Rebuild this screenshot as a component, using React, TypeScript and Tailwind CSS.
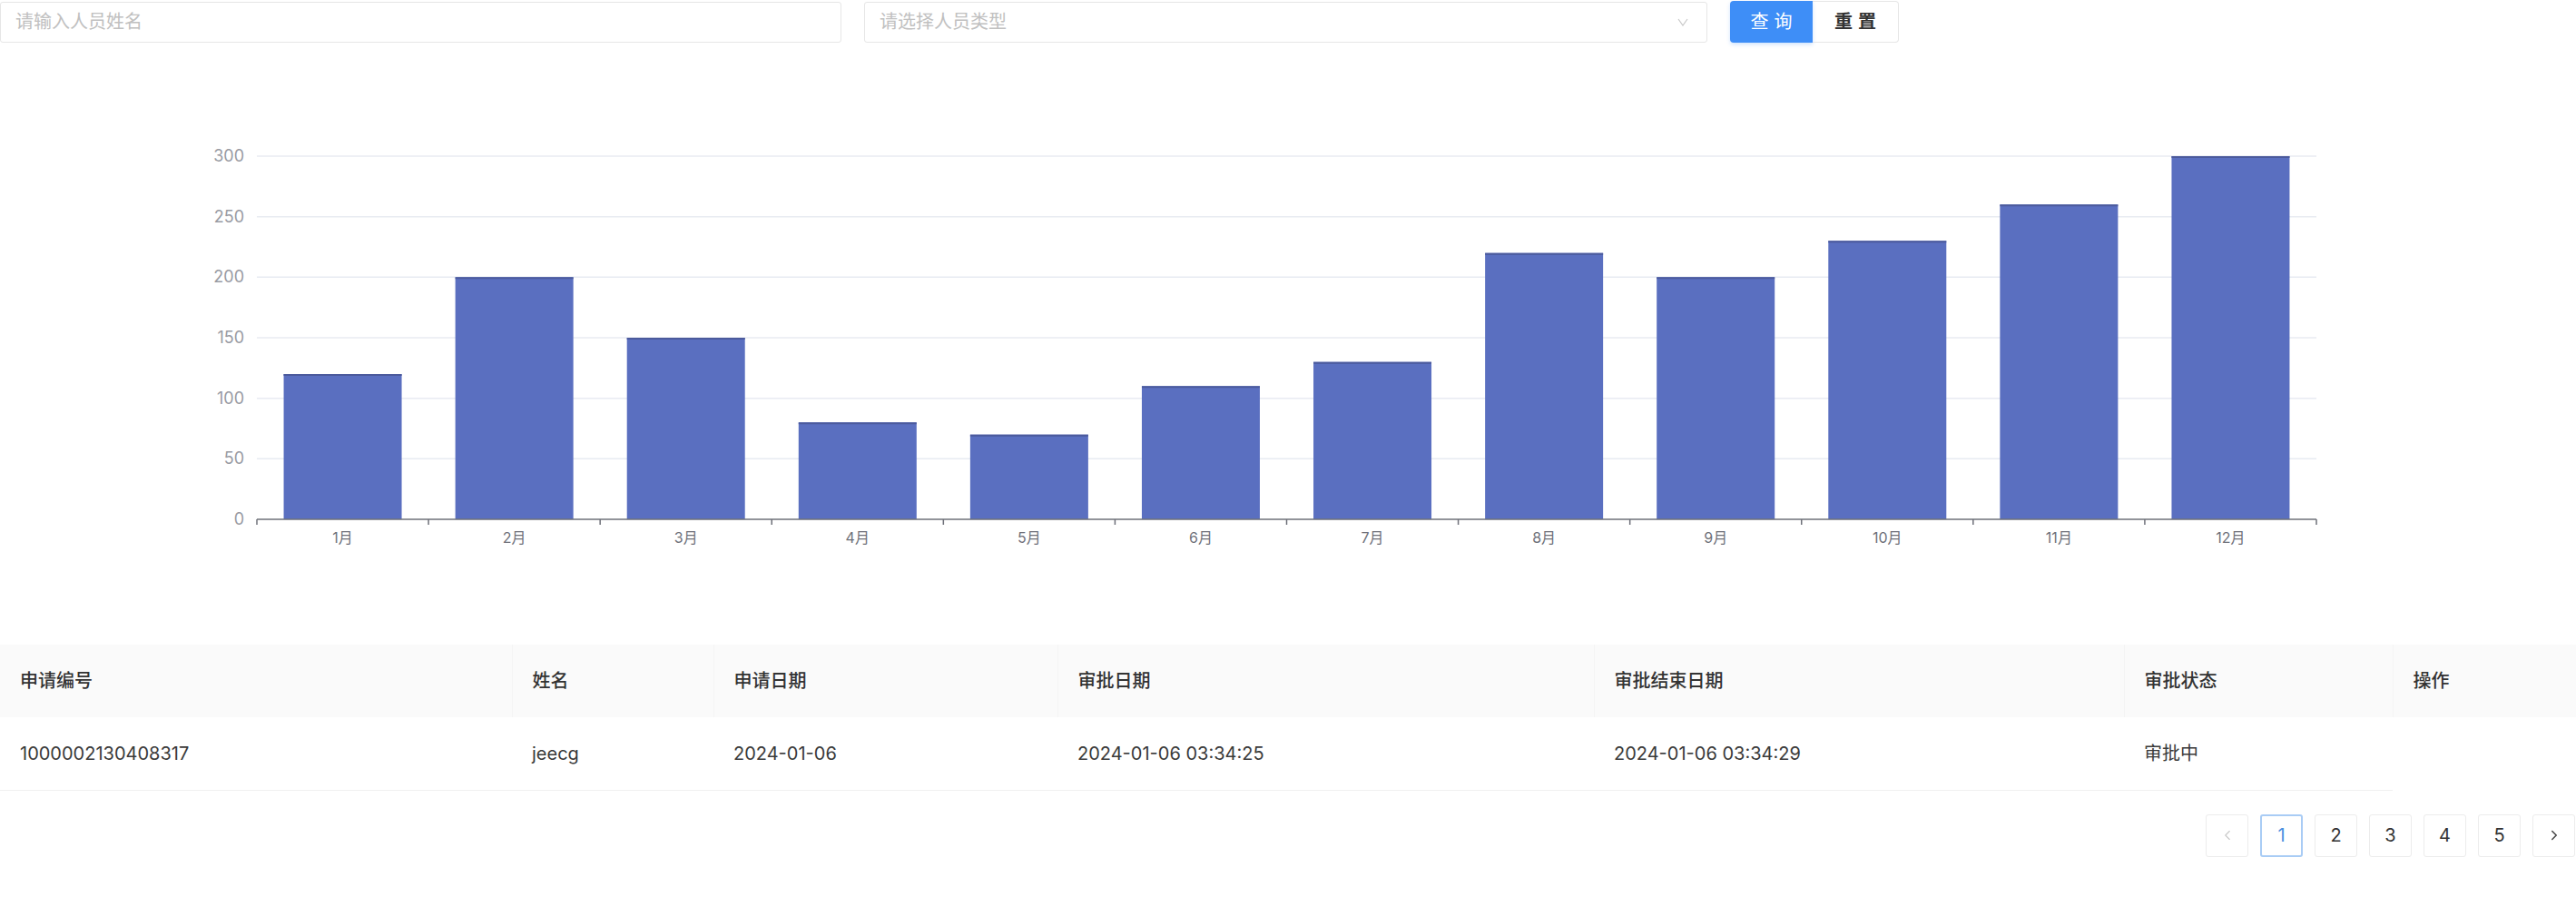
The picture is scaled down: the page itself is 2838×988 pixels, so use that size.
import { ChevronLeft, ChevronRight } from "lucide-react";

const months = ["1月", "2月", "3月", "4月", "5月", "6月", "7月", "8月", "9月", "10月", "11月", "12月"];
const values = [120, 200, 150, 80, 70, 110, 130, 220, 200, 230, 260, 300];

// chart geometry, in page pixels
const X0 = 283;
const X1 = 2552;
const Y0 = 572;
const PX_PER_UNIT = 400 / 300;
const CAT = (X1 - X0) / 12;
const BAR_W = 130;

function BarChart() {
  const ticks = [0, 50, 100, 150, 200, 250, 300];
  return (
    <svg
      width={2838}
      height={663}
      viewBox="0 47 2838 663"
      className="block"
      fontFamily="Inter, 'Noto Sans CJK SC', sans-serif"
    >
      {ticks.map((t) => {
        const y = Y0 - t * PX_PER_UNIT;
        return (
          <g key={t}>
            {t > 0 && <line x1={X0} x2={X1} y1={y} y2={y} stroke="#e8ebf2" strokeWidth={1.5} />}
            <text x={269} y={y + 6} textAnchor="end" fontSize={18} fill="#999ba3">
              {t}
            </text>
          </g>
        );
      })}

      {values.map((v, i) => {
        const cx = X0 + (i + 0.5) * CAT;
        const top = Y0 - v * PX_PER_UNIT;
        return (
          <g key={i}>
            <rect x={cx - BAR_W / 2} y={top} width={BAR_W} height={Y0 - top} fill="#5a6fc0" />
            <line x1={cx - BAR_W / 2} x2={cx + BAR_W / 2} y1={top + 1} y2={top + 1} stroke="#4b5a9c" strokeWidth={2} />
            <text x={cx} y={598} textAnchor="middle" fontSize={16} fill="#6e7079">
              {months[i]}
            </text>
          </g>
        );
      })}

      {/* x axis */}
      <line x1={X0} x2={X1} y1={Y0} y2={Y0} stroke="#6e7079" strokeWidth={1.5} />
      {Array.from({ length: 13 }).map((_, i) => {
        const x = X0 + i * CAT;
        return <line key={i} x1={x} x2={x} y1={Y0} y2={Y0 + 6} stroke="#6e7079" strokeWidth={1.5} />;
      })}
    </svg>
  );
}

const columns = [
  { title: "申请编号", width: "w-[564px]" },
  { title: "姓名", width: "w-[222px]" },
  { title: "申请日期", width: "w-[379px]" },
  { title: "审批日期", width: "w-[591px]" },
  { title: "审批结束日期", width: "w-[584px]" },
  { title: "审批状态", width: "w-[296px]" },
  { title: "操作", width: "w-[202px]" },
];

const row = ["1000002130408317", "jeecg", "2024-01-06", "2024-01-06 03:34:25", "2024-01-06 03:34:29", "审批中", ""];

export default function App() {
  return (
    <div className="w-[2838px] h-[988px] bg-white overflow-hidden font-[Inter,'Noto_Sans_CJK_SC',sans-serif]">
      {/* search bar */}
      <div className="flex items-center h-[47px] pt-px">
        <div className="w-[927px] h-[45px] border border-[#e6e6e6] rounded-[3px] flex items-center px-4 text-[20px] text-[#c0c0c0]">
          请输入人员姓名
        </div>
        <div className="ml-[25px] w-[929px] h-[45px] border border-[#e6e6e6] rounded-[3px] flex items-center justify-between pl-4 pr-[20px] text-[20px] text-[#c0c0c0]">
          <span>请选择人员类型</span>
          <svg width="12" height="9" viewBox="0 0 12 9" fill="none">
            <polyline points="1,1 6,8 11,1" stroke="#c8c8c8" strokeWidth="1.2" />
          </svg>
        </div>
        <button className="ml-[25px] w-[91px] h-[46px] bg-[#3e8ef7] text-white text-[20px] rounded-l-[4px] tracking-[6px] pl-[6px] shadow-[0_2px_4px_rgba(62,142,247,0.25)]">
          查询
        </button>
        <button className="w-[95px] h-[46px] border border-[#e6e6e6] border-l-0 text-[#333] font-semibold text-[20px] rounded-r-[4px] tracking-[6px] pl-[6px]">
          重置
        </button>
      </div>

      <BarChart />

      {/* table */}
      <table className="table-fixed w-[2838px] border-collapse">
        <colgroup>
          {columns.map((c) => (
            <col key={c.title} className={c.width} />
          ))}
        </colgroup>
        <thead>
          <tr className="h-[80px] bg-[#fafafa]">
            {columns.map((c, i) => (
              <th
                key={c.title}
                className={`text-left pl-[22px] text-[20px] font-medium text-[#333] ${
                  i < columns.length - 1 ? "border-r border-[#f4f4f4]" : ""
                }`}
              >
                {c.title}
              </th>
            ))}
          </tr>
        </thead>
        <tbody>
          <tr className="h-[80px]">
            {row.map((cell, i) => (
              <td
                key={i}
                className={`pl-[22px] text-[20px] text-[#3a3a3a] ${
                  i < row.length - 1 ? "border-b border-[#f0f0f0]" : ""
                }`}
              >
                {cell}
              </td>
            ))}
          </tr>
        </tbody>
      </table>

      {/* pagination */}
      <div className="flex justify-end gap-[13px] mt-[26px] pr-px">
        <div className="w-[47px] h-[47px] border border-[#ececec] rounded-[3px] flex items-center justify-center text-[#c8c8c8]">
          <ChevronLeft size={18} strokeWidth={1.5} />
        </div>
        {[1, 2, 3, 4, 5].map((n) => (
          <div
            key={n}
            className={`w-[47px] h-[47px] rounded-[3px] flex items-center justify-center text-[20px] ${
              n === 1 ? "border-2 border-[#a9ccf5] text-[#4a8fe0]" : "border border-[#ececec] text-[#333]"
            }`}
          >
            {n}
          </div>
        ))}
        <div className="w-[47px] h-[47px] border border-[#ececec] rounded-[3px] flex items-center justify-center text-[#444]">
          <ChevronRight size={18} strokeWidth={2} />
        </div>
      </div>
    </div>
  );
}
